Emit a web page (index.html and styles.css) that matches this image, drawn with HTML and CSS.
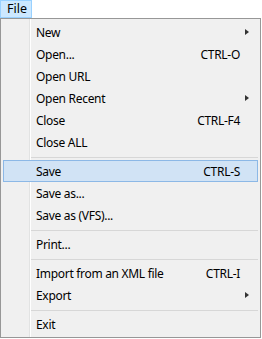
FILE: index.html
```html
<html>
<head>
<link rel="stylesheet" href="styles.css">
</head>
<body>

<div class="menubar">
<span class="menuTitle">File</span>
</div>

<div class="menu">
<div class="item"><span class="label">New</span><span class="key"></span><span class="sub"><span class="arrow"></span></span></div>
<div class="item"><span class="label">Open...</span><span class="key">CTRL-O</span><span class="sub"></span></div>
<div class="item"><span class="label">Open URL</span><span class="key"></span><span class="sub"></span></div>
<div class="item"><span class="label">Open Recent</span><span class="key"></span><span class="sub"><span class="arrow"></span></span></div>
<div class="item"><span class="label">Close</span><span class="key">CTRL-F4</span><span class="sub"></span></div>
<div class="item"><span class="label">Close ALL</span><span class="key"></span><span class="sub"></span></div>
<div class="sep"></div>
<div class="item active"><span class="label">Save</span><span class="key">CTRL-S</span><span class="sub"></span></div>
<div class="item"><span class="label">Save as...</span><span class="key"></span><span class="sub"></span></div>
<div class="item"><span class="label">Save as (VFS)...</span><span class="key"></span><span class="sub"></span></div>
<div class="sep"></div>
<div class="item"><span class="label">Print...</span><span class="key"></span><span class="sub"></span></div>
<div class="sep"></div>
<div class="item"><span class="label">Import from an XML file</span><span class="key">CTRL-I</span><span class="sub"></span></div>
<div class="item"><span class="label">Export</span><span class="key"></span><span class="sub"><span class="arrow"></span></span></div>
<div class="sep"></div>
<div class="item"><span class="label">Exit</span><span class="key"></span><span class="sub"></span></div>
</div>

</body>
</html>
```

FILE: styles.css
```css
body {
	margin: 0;
	background-color: white;
	font-family: "Noto Sans", "Liberation Sans", sans-serif;
	font-size: 12px;
	letter-spacing: -0.3px;
	color: black;
}

.menubar {
	height: 18px;
}

.menuTitle {
	display: inline-block;
	box-sizing: border-box;
	width: 32px;
	height: 18px;
	line-height: 16px;
	padding-left: 6px;
	font-size: 12.5px;
	letter-spacing: 0;
	background-color: #cce8ff;
	border: 1px solid #99d1ff;
}

.menu {
	box-sizing: border-box;
	width: 261px;
	padding: 2px;
	border: 1px solid #979797;
	background-color: #f0f0f0;
	background-image: linear-gradient(to right, transparent 28px, #e2e3e3 28px, #e2e3e3 29px, #ffffff 29px, #ffffff 30px, transparent 30px);
}

.item {
	display: flex;
	align-items: center;
	box-sizing: border-box;
	height: 22px;
	padding-left: 32px;
	padding-right: 6px;
	border: 1px solid transparent;
}

.item.active {
	background-color: #d1e3f5;
	border-color: #8cb8e6;
}

.label {
	flex: 1;
	white-space: nowrap;
}

.key {
	white-space: nowrap;
}

.sub {
	display: flex;
	align-items: center;
	width: 11px;
	height: 22px;
}

.arrow {
	margin-left: 5px;
	width: 0;
	height: 0;
	border-top: 3.5px solid transparent;
	border-bottom: 3.5px solid transparent;
	border-left: 4px solid #333;
}

.sep {
	height: 1px;
	margin: 4px 0 2px 28px;
	background-color: #d7d7d7;
}
```
